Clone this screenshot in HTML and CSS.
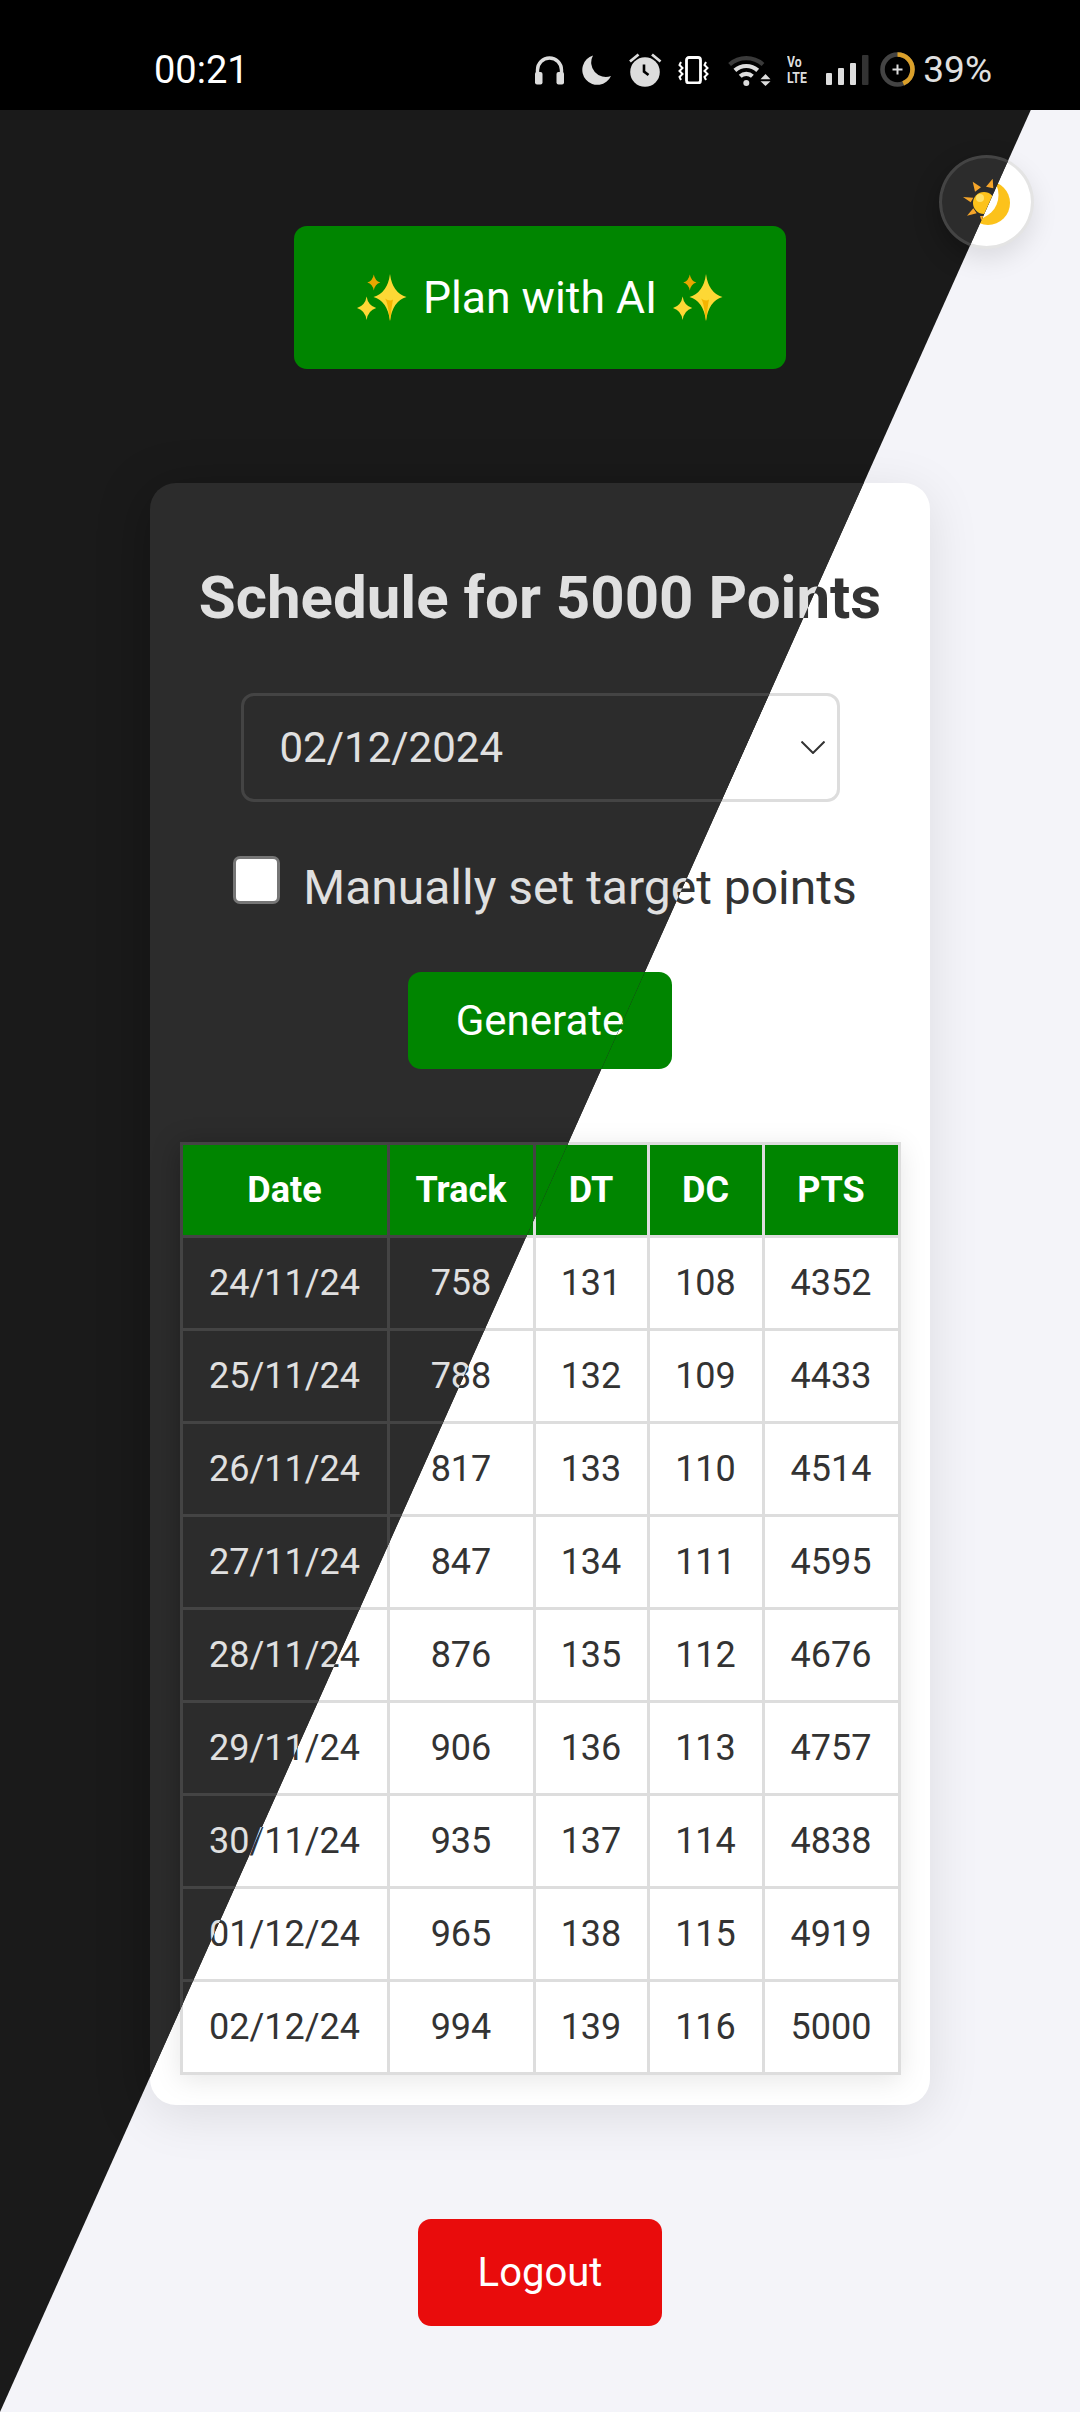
FILE: index.html
```html
<!DOCTYPE html>
<html lang="en">
<head>
<meta charset="utf-8">
<title>Schedule</title>
<link rel="stylesheet" href="styles.css">
</head>
<body>
<svg class="defs" width="0" height="0" aria-hidden="true">
  <defs>
    <symbol id="sparkles" viewBox="0 0 50 47">
      <path fill="#e8a600" d="M16.8 0.5Q18 7 23.3 8.5Q18 10 16.8 16.5Q15.6 10 10.3 8.5Q15.6 7 16.8 0.5Z"/>
      <path fill="#fdd835" d="M33 0Q35.5 19 49.5 23Q35.5 27 33 47Q30.5 27 16.5 23Q30.5 19 33 0Z"/>
      <path fill="#f4b400" d="M33 47Q30.5 27 28 24.5Q33 28 36 25.5Q35 30 33 47Z"/>
      <path fill="#fdd835" d="M9.6 22.5Q11 31.5 19.2 34Q11 36.5 9.6 46Q8.2 36.5 0 34Q8.2 31.5 9.6 22.5Z"/>
    </symbol>
  </defs>
</svg>
<div class="screen">
  <header class="statusbar">
    <span class="time">00:21</span>
    <div class="status-icons">
      <svg class="ic-head" viewBox="0 0 31 30"><path d="M3.5 19V15a12 12 0 0 1 24 0v4" fill="none" stroke="#ddd" stroke-width="3.4"/><rect x="1" y="17" width="7.5" height="12.5" rx="2" fill="#ddd"/><rect x="22.5" y="17" width="7.5" height="12.5" rx="2" fill="#ddd"/></svg>
      <svg class="ic-moon" viewBox="0 0 32 30"><path d="M12 0.500A15 15 0 1 0 30 21A14.500 14.500 0 0 1 12 0.500Z" fill="#ddd"/></svg>
      <svg class="ic-alarm" viewBox="0 0 33 34"><circle cx="16" cy="19" r="14.800" fill="#ddd"/><path d="M1 8.500 9.500 1.500M23 1.500 31.500 8.500" stroke="#ddd" stroke-width="2.800"/><path d="M15 11.500V18.500L19.500 22" fill="none" stroke="#000" stroke-width="2.600"/></svg>
      <svg class="ic-vib" viewBox="0 0 32 28"><rect x="8.500" y="1.500" width="14" height="25.500" rx="2.500" fill="none" stroke="#fff" stroke-width="2.800"/><path d="M3 6 1.500 9 4.500 12 1.500 15 4.500 18 1.500 21 3 24M28 6 26.500 9 29.500 12 26.500 15 29.500 18 26.500 21 28 24" fill="none" stroke="#fff" stroke-width="2"/></svg>
      <svg class="ic-wifi" viewBox="0 0 45 32"><path d="M3.600 10.500A25 25 0 0 1 37 10.500" fill="none" stroke="#3a3a3a" stroke-width="4.200"/><path d="M8.900 16.400A17 17 0 0 1 31.700 16.400" fill="none" stroke="#ddd" stroke-width="4.200"/><path d="M14.200 22.300A9 9 0 0 1 26.400 22.300" fill="none" stroke="#ddd" stroke-width="4.200"/><circle cx="20.300" cy="29" r="3" fill="#ddd"/><path d="M39.500 20 44.500 25.300H34.500ZM34.500 27.300H44.500L39.500 32Z" fill="#ddd"/></svg>
      <div class="volte">Vo<br>LTE</div>
      <svg class="ic-signal" viewBox="0 0 43 30"><rect x="0" y="18" width="6" height="12" rx="1" fill="#ddd"/><rect x="12" y="13" width="6" height="17" rx="1" fill="#ddd"/><rect x="24" y="8" width="6" height="22" rx="1" fill="#ddd"/><rect x="36" y="0" width="6.500" height="30" rx="1" fill="#333"/></svg>
      <svg class="ic-ring" viewBox="0 0 35 35"><circle cx="17.500" cy="17.500" r="15" fill="none" stroke="#444" stroke-width="4.600"/><circle cx="17.500" cy="17.500" r="15" fill="none" stroke="#dba02a" stroke-width="4.600" stroke-dasharray="41 94.300" transform="rotate(-90 17.500 17.500)"/><path d="M17.500 12.500v10M12.500 17.500h10" stroke="#ddd" stroke-width="2"/></svg>
      <span class="battery">39%</span>
    </div>
  </header>

  <div class="theme theme-light">
    <button class="toggle" type="button" aria-label="Toggle theme">
      <svg class="toggle-icon" viewBox="955 170 64 64"><circle cx="988" cy="203" r="22" fill="#fcc21b"/><circle cx="974" cy="195" r="24.500" fill="#fff"/></svg>
    </button>
    <main class="page">
      <button class="btn btn-ai" type="button"><svg class="sparkle"><use href="#sparkles"/></svg>Plan with AI<svg class="sparkle"><use href="#sparkles"/></svg></button>
      <section class="card">
        <h2 class="title">Schedule for 5000 Points</h2>
        <div class="select-wrap">
          <select class="date-select"><option>02/12/2024</option></select>
          <svg class="chevron" viewBox="0 0 24 13"><path d="M0.500 0.500 12 12 23.500 0.500" fill="none" stroke-width="2"/></svg>
        </div>
        <label class="check-row"><input class="check" type="checkbox"><span>Manually set target points</span></label>
        <button class="btn btn-generate" type="button">Generate</button>
        <table class="schedule">
          <colgroup><col class="c-date"><col class="c-track"><col class="c-dt"><col class="c-dc"><col class="c-pts"></colgroup>
          <thead><tr><th>Date</th><th>Track</th><th>DT</th><th>DC</th><th>PTS</th></tr></thead>
          <tbody>
            <tr><td>24/11/24</td><td>758</td><td>131</td><td>108</td><td>4352</td></tr>
            <tr><td>25/11/24</td><td>788</td><td>132</td><td>109</td><td>4433</td></tr>
            <tr><td>26/11/24</td><td>817</td><td>133</td><td>110</td><td>4514</td></tr>
            <tr><td>27/11/24</td><td>847</td><td>134</td><td>111</td><td>4595</td></tr>
            <tr><td>28/11/24</td><td>876</td><td>135</td><td>112</td><td>4676</td></tr>
            <tr><td>29/11/24</td><td>906</td><td>136</td><td>113</td><td>4757</td></tr>
            <tr><td>30/11/24</td><td>935</td><td>137</td><td>114</td><td>4838</td></tr>
            <tr><td>01/12/24</td><td>965</td><td>138</td><td>115</td><td>4919</td></tr>
            <tr><td>02/12/24</td><td>994</td><td>139</td><td>116</td><td>5000</td></tr>
          </tbody>
        </table>
      </section>
      <button class="btn btn-logout" type="button">Logout</button>
    </main>
  </div>

  <div class="theme theme-dark">
    <button class="toggle" type="button" aria-label="Toggle theme">
      <svg class="toggle-icon" viewBox="955 170 64 64">
        <path fill="#f5a52a" d="M972.700 181.700 981 187.300 975 191.700ZM992.700 178.700 993.300 188.300 986 186.700ZM963 197 973.300 197.700 970.700 202.300ZM967 215.700 973.300 208.300 976.700 213.300ZM980 216 985 216 981.700 221.700ZM1005 203 996 198 996 208Z"/>
        <circle cx="984" cy="203" r="11" fill="#fcc21b"/>
        <circle cx="980" cy="198" r="4" fill="#fde06a"/>
      </svg>
    </button>
    <main class="page">
      <button class="btn btn-ai" type="button"><svg class="sparkle"><use href="#sparkles"/></svg>Plan with AI<svg class="sparkle"><use href="#sparkles"/></svg></button>
      <section class="card">
        <h2 class="title">Schedule for 5000 Points</h2>
        <div class="select-wrap">
          <select class="date-select"><option>02/12/2024</option></select>
          <svg class="chevron" viewBox="0 0 24 13"><path d="M0.500 0.500 12 12 23.500 0.500" fill="none" stroke-width="2"/></svg>
        </div>
        <label class="check-row"><input class="check" type="checkbox"><span>Manually set target points</span></label>
        <button class="btn btn-generate" type="button">Generate</button>
        <table class="schedule">
          <colgroup><col class="c-date"><col class="c-track"><col class="c-dt"><col class="c-dc"><col class="c-pts"></colgroup>
          <thead><tr><th>Date</th><th>Track</th><th>DT</th><th>DC</th><th>PTS</th></tr></thead>
          <tbody>
            <tr><td>24/11/24</td><td>758</td><td>131</td><td>108</td><td>4352</td></tr>
            <tr><td>25/11/24</td><td>788</td><td>132</td><td>109</td><td>4433</td></tr>
            <tr><td>26/11/24</td><td>817</td><td>133</td><td>110</td><td>4514</td></tr>
            <tr><td>27/11/24</td><td>847</td><td>134</td><td>111</td><td>4595</td></tr>
            <tr><td>28/11/24</td><td>876</td><td>135</td><td>112</td><td>4676</td></tr>
            <tr><td>29/11/24</td><td>906</td><td>136</td><td>113</td><td>4757</td></tr>
            <tr><td>30/11/24</td><td>935</td><td>137</td><td>114</td><td>4838</td></tr>
            <tr><td>01/12/24</td><td>965</td><td>138</td><td>115</td><td>4919</td></tr>
            <tr><td>02/12/24</td><td>994</td><td>139</td><td>116</td><td>5000</td></tr>
          </tbody>
        </table>
      </section>
      <button class="btn btn-logout" type="button">Logout</button>
    </main>
  </div>
</div>
</body>
</html>
```

FILE: styles.css
```css
* { box-sizing: border-box; }
html, body { margin: 0; padding: 0; }
body { font-family: Roboto, "Noto Sans", sans-serif; background: #f4f4f9; }
.defs { position: absolute; }

.screen { position: relative; width: 1080px; height: 2412px; overflow: hidden; }

.statusbar {
  position: relative; z-index: 3;
  height: 110px; background: #000;
  display: flex; justify-content: space-between; align-items: center;
  padding: 29px 88px 0 154px;
}
.time { font-size: 38px; color: #fff; line-height: 1; }
.status-icons { display: flex; align-items: center; gap: 16px; color: #ddd; }
.status-icons svg { display: block; flex: none; }
.ic-head { width: 31px; height: 30px; }
.ic-moon { width: 32px; height: 30px; }
.ic-alarm { width: 33px; height: 34px; }
.ic-vib { width: 32px; height: 28px; }
.ic-wifi { width: 45px; height: 32px; }
.volte {
  width: 23px; height: 32px; flex: none; color: #ddd;
  font-size: 15px; line-height: 16px; font-weight: 700; white-space: nowrap;
  transform: scaleX(.82); transform-origin: 0 50%;
}
.ic-signal { width: 43px; height: 30px; }
.ic-ring { width: 35px; height: 35px; margin-left: -5px; }
.battery { font-size: 37px; line-height: 1; color: #e0e0e0; margin-left: -8px; }

.theme { --bg: #f4f4f9; --card: #fff; --text: #333; --line: #ddd; --shadow: rgba(0,0,0,.1); }
.theme-dark {
  --bg: #1a1a1a; --card: #2c2c2c; --text: #e0e0e0; --line: #444; --shadow: rgba(0,0,0,.3);
  position: absolute; inset: 0;
  clip-path: polygon(0 0, 100% 0, 0 100%);
  z-index: 2;
}
.theme-light { position: absolute; inset: 0; z-index: 1; }
.theme { background: var(--bg); color: var(--text); }

.page { display: flex; flex-direction: column; align-items: center; padding-top: 226px; }

.toggle {
  position: absolute; left: 939px; top: 155px;
  width: 95px; height: 94px; padding: 0;
  border-radius: 50%;
  border: 3px solid var(--line);
  background: var(--card);
  box-shadow: 0 10px 26px var(--shadow);
  display: flex; align-items: center; justify-content: center;
}
.theme-light .toggle { border-color: #e4e4e4; }
.toggle-icon { width: 64px; height: 64px; display: block; flex: none; }

.btn {
  border: 0; border-radius: 13px; color: #fff;
  font-family: Roboto, sans-serif;
  display: flex; align-items: center; justify-content: center;
}
.btn-ai { width: 492px; height: 143px; background: #008500; font-size: 44.5px; gap: 16px; }
.sparkle { width: 50px; height: 47px; display: block; flex: none; }

.card {
  width: 780px; margin-top: 114px;
  padding: 81px 30px 30px;
  border-radius: 26px;
  background: var(--card);
  box-shadow: 0 10px 52px var(--shadow);
  display: flex; flex-direction: column; align-items: center;
}
.title { margin: 0; font-size: 60px; line-height: 68px; font-weight: 700; white-space: nowrap; }

.select-wrap { position: relative; width: 599px; height: 109px; margin-top: 61px; }
.date-select {
  width: 100%; height: 100%;
  appearance: none; -webkit-appearance: none;
  border: 3px solid var(--line); border-radius: 13px;
  background: var(--card); color: var(--text);
  font-family: Roboto, sans-serif; font-size: 42px;
  padding: 0 0 0 36px;
}
.chevron { position: absolute; right: 15px; top: 48px; width: 24px; height: 13px; stroke: var(--text); }

.check-row { display: flex; align-items: flex-start; gap: 23px; margin-top: 54px; padding-left: 10px; height: 60px; font-size: 48px; line-height: 64px; white-space: nowrap; }
.check {
  appearance: none; -webkit-appearance: none; margin: 0;
  width: 47px; height: 48px; flex: none;
  background: #fff; border: 3px solid #767676; border-radius: 7px;
}

.btn-generate { width: 264px; height: 97px; margin-top: 56px; background: #008500; font-size: 42px; }

.schedule {
  margin-top: 73px; border-collapse: collapse; table-layout: fixed;
  width: 718px; font-size: 36px;
  box-shadow: 0 5px 26px var(--shadow);
}
.c-date { width: 207px; }
.c-track { width: 146px; }
.c-dt { width: 114px; }
.c-dc { width: 115px; }
.c-pts { width: 136px; }
.schedule th, .schedule td {
  border: 3px solid var(--line); height: 93px; padding: 0; text-align: center; font-weight: 400;
}
.schedule th { background: #008500; color: #fff; font-weight: 700; }

.btn-logout { width: 244px; height: 107px; margin-top: 114px; background: #e90c0c; font-size: 40px; }
```
